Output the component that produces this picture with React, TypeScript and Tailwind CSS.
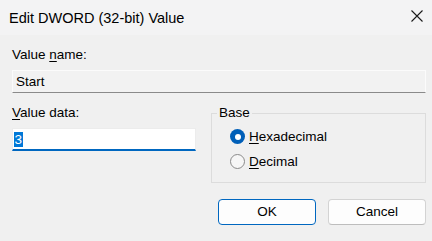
import React from "react";

function Radio({ checked, label, mn }: { checked: boolean; label: string; mn: number }) {
  return (
    <div className="flex items-center h-[25px] ml-[13px]">
      {checked ? (
        <div className="w-[15px] h-[15px] rounded-full bg-[#005fb8] flex items-center justify-center">
          <div className="w-[6px] h-[6px] rounded-full bg-white" />
        </div>
      ) : (
        <div className="w-[15px] h-[15px] rounded-full border border-[#8a8a8a] bg-[#f6f6f6]" />
      )}
      <span className="ml-[4px] leading-[16px]">
        <u className="underline-offset-[2px]">{label.slice(0, mn)}</u>
        {label.slice(mn)}
      </span>
    </div>
  );
}

export default function App() {
  return (
    <div
      className="w-[432px] h-[241px] bg-[#f0f0f0] text-[#000] overflow-hidden"
      style={{ fontFamily: '"Liberation Sans", Arial, sans-serif' }}
    >
      <div className="h-[35px] bg-[#f3f3f4] flex items-center justify-between pl-[9px] pr-[9px]">
        <span className="text-[14.5px] leading-[20px]">Edit DWORD (32-bit) Value</span>
        <svg width="12" height="12" viewBox="0 0 12 12" className="mb-[3px]">
          <path d="M0.5 0.5 L11.5 11.5 M11.5 0.5 L0.5 11.5" stroke="#1a1a1a" strokeWidth="1.1" fill="none" />
        </svg>
      </div>
      <div className="pt-[12px] pl-[12px] pr-[6px] text-[13.5px]">
        <div className="leading-[16px]">
          Value <u className="underline-offset-[2px]">n</u>ame:
        </div>
        <div className="mt-[7px] h-[23px] bg-[#f2f2f2] border border-[#fbfbfb] border-b-[#8a8a8a] flex items-center pl-[3px] leading-[16px]">
          Start
        </div>
        <div className="mt-[12px] flex">
          <div className="w-[184px]">
            <div className="leading-[16px]">
              <u className="underline-offset-[2px]">V</u>alue data:
            </div>
            <div className="mt-[7px] h-[23px] bg-white border border-[#ececec] border-b-2 border-b-[#0067c0] flex items-center pl-[1px]">
              <span className="bg-[#0078d7] text-white leading-[15px] px-[0.5px]">3</span>
            </div>
          </div>
          <fieldset className="ml-[15px] w-[215px] border border-[#dcdcdc] pl-[5px] pt-[3px] pb-[8px]">
            <legend className="px-[2px] leading-[16px]">Base</legend>
            <Radio checked label="Hexadecimal" mn={1} />
            <Radio checked={false} label="Decimal" mn={1} />
          </fieldset>
        </div>
        <div className="mt-[16px] flex justify-end gap-[12px]">
          <button className="w-[98px] h-[26px] rounded-[4px] border border-[#0067c0] bg-[#fdfdfd] leading-[16px]">
            OK
          </button>
          <button className="w-[98px] h-[26px] rounded-[4px] border border-[#d3d3d3] border-b-[#bdbdbd] bg-[#fdfdfd] leading-[16px]">
            Cancel
          </button>
        </div>
      </div>
    </div>
  );
}
